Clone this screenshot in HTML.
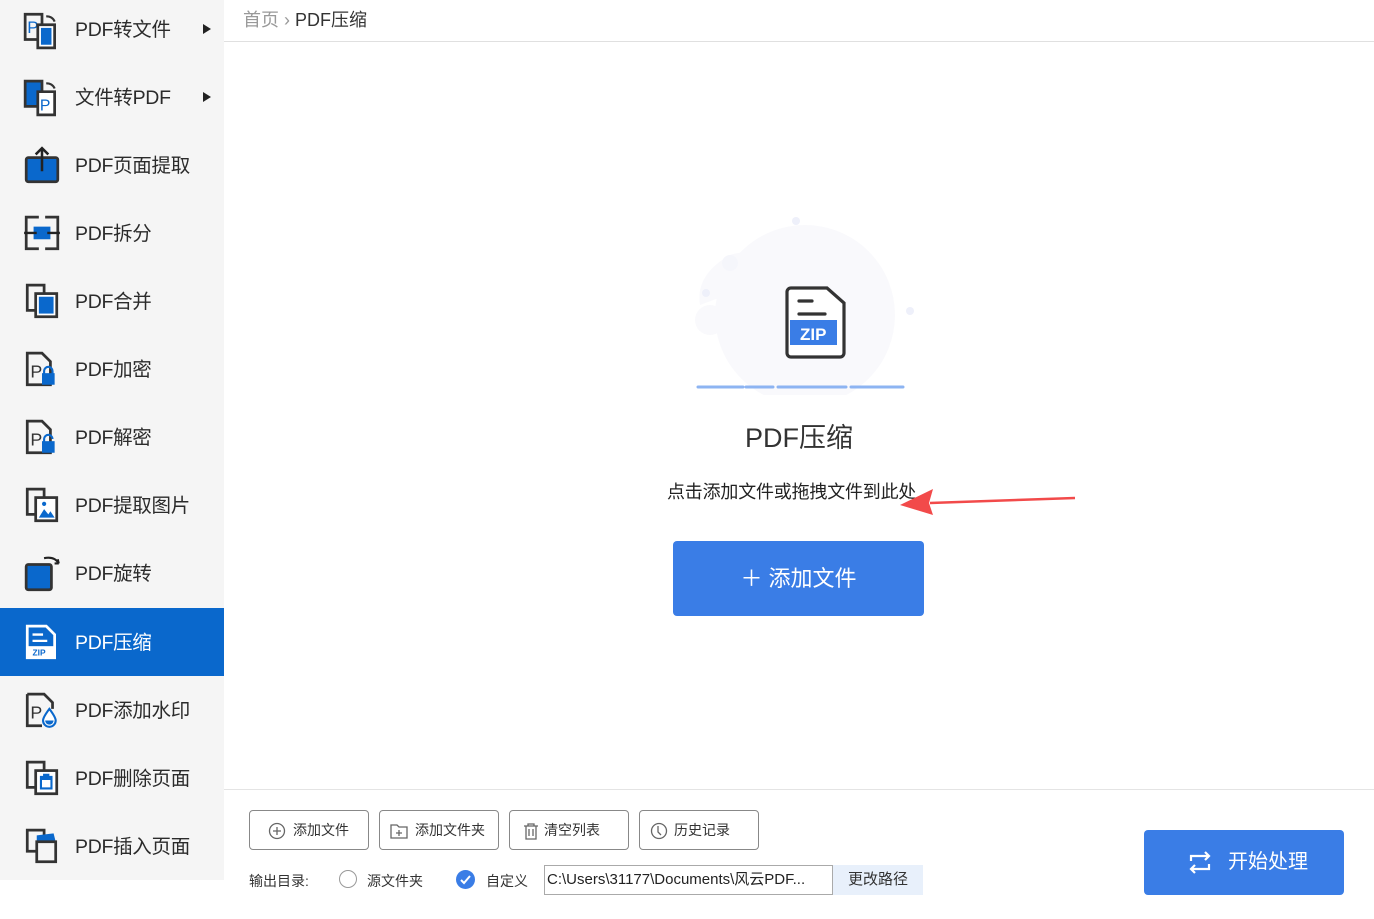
<!DOCTYPE html>
<html><head><meta charset="utf-8"><style>
*{margin:0;padding:0;box-sizing:border-box}
body{width:1374px;height:919px;position:relative;background:#fff;font-family:"Liberation Sans","Noto Sans CJK SC",sans-serif;color:#333;overflow:hidden}
.sb{position:absolute;left:0;top:0;width:224px;height:880px;background:#f5f5f5}
.it{position:absolute;left:0;width:224px;height:68px}
.it svg{position:absolute;left:23px;top:15px}
.it span{position:absolute;left:75px;top:22px;font-size:19.5px;line-height:26px;color:#2b2b2b;letter-spacing:-0.3px}
.it.act{background:#0a68cc}
.it.act span{color:#fff}
.tri{position:absolute;left:203px;top:29px;width:0;height:0;border-left:8px solid #222;border-top:5px solid transparent;border-bottom:5px solid transparent}
.bc{position:absolute;left:243px;top:6px;font-size:18px;color:#999}
.bc b{font-weight:normal;color:#333}
.hl{position:absolute;left:224px;top:41px;width:1150px;height:1px;background:#e0e0e0}
.fl{position:absolute;left:224px;top:789px;width:1150px;height:1px;background:#e4e4e4}
.btn{position:absolute;top:810px;width:120px;height:40px;border:1px solid #888;border-radius:4px;font-size:14px;color:#333;line-height:38px}
.btn svg{position:absolute;left:18px;top:11px}
.btn span{position:absolute;left:43px}
</style></head><body>
<div class="sb">
<div class="it" style="top:-5px"><svg width="38" height="40" viewBox="0 0 36 38"><path d="M2 4h16v24H2z" fill="none" stroke="#333" stroke-width="2.6"/><text x="4" y="22" font-size="16" fill="#0a68cc" font-family="Liberation Sans">P</text><path d="M14 14h16v22H14z" fill="#fff" stroke="#333" stroke-width="2.6"/><rect x="17" y="17" width="10" height="16" fill="#0a68cc"/><path d="M22 6q6 0 8 5" fill="none" stroke="#333" stroke-width="2"/></svg><span>PDF转文件</span><i class="tri"></i></div>
<div class="it" style="top:63px"><svg width="38" height="40" viewBox="0 0 36 38"><path d="M2 3h16v24H2z" fill="#0a68cc" stroke="#333" stroke-width="2.6"/><path d="M14 13h16v22H14z" fill="#fff" stroke="#333" stroke-width="2.6"/><text x="16" y="31" font-size="15" fill="#0a68cc" font-family="Liberation Sans">P</text><path d="M22 5q6 0 8 5" fill="none" stroke="#333" stroke-width="2"/></svg><span>文件转PDF</span><i class="tri"></i></div>
<div class="it" style="top:131px"><svg width="38" height="40" viewBox="0 0 36 38"><rect x="3" y="11" width="30" height="23" rx="2" fill="#0a68cc" stroke="#333" stroke-width="2.6"/><path d="M18 24V2M12 8l6-6 6 6" fill="none" stroke="#222" stroke-width="2.4"/></svg><span>PDF页面提取</span></div>
<div class="it" style="top:199px"><svg width="38" height="40" viewBox="0 0 36 38"><path d="M15 3H3v30h12M21 3h12v30H21" fill="none" stroke="#333" stroke-width="2.6"/><rect x="10" y="12" width="16" height="12" fill="#0a68cc"/><path d="M1 18h12M23 18H35" stroke="#222" stroke-width="2.2"/></svg><span>PDF拆分</span></div>
<div class="it" style="top:267px"><svg width="38" height="40" viewBox="0 0 36 38"><path d="M4 3h16v24H4z" fill="none" stroke="#333" stroke-width="2.6"/><rect x="12" y="11" width="20" height="22" fill="#fff" stroke="#333" stroke-width="2.6"/><rect x="15" y="14" width="14" height="16" fill="#0a68cc"/></svg><span>PDF合并</span></div>
<div class="it" style="top:335px"><svg width="38" height="40" viewBox="0 0 36 38"><path d="M4 3h14l8 8v22H4z" fill="none" stroke="#333" stroke-width="2.6"/><text x="7" y="26" font-size="17" fill="#333" font-family="Liberation Sans">P</text><rect x="18" y="22" width="12" height="11" fill="#0a68cc"/><path d="M20 23v-3a4 4 0 018 0v3" fill="none" stroke="#0a68cc" stroke-width="2"/></svg><span>PDF加密</span></div>
<div class="it" style="top:403px"><svg width="38" height="40" viewBox="0 0 36 38"><path d="M4 3h14l8 8v22H4z" fill="none" stroke="#333" stroke-width="2.6"/><text x="7" y="26" font-size="17" fill="#333" font-family="Liberation Sans">P</text><rect x="18" y="22" width="12" height="11" fill="#0a68cc"/><path d="M20 23v-3a4 4 0 018 0" fill="none" stroke="#0a68cc" stroke-width="2"/></svg><span>PDF解密</span></div>
<div class="it" style="top:471px"><svg width="38" height="40" viewBox="0 0 36 38"><path d="M4 3h16v24H4z" fill="none" stroke="#333" stroke-width="2.6"/><rect x="12" y="11" width="20" height="22" fill="#fff" stroke="#333" stroke-width="2.6"/><path d="M15 30l5-8 4 5 2-3 4 6z" fill="#0a68cc"/><circle cx="20" cy="17" r="2" fill="#0a68cc"/></svg><span>PDF提取图片</span></div>
<div class="it" style="top:539px"><svg width="40" height="40" viewBox="0 0 38 38"><rect x="3" y="10" width="24" height="24" rx="2" fill="#0a68cc" stroke="#333" stroke-width="2.6"/><path d="M20 4q10-2 14 5M34 9l-1-4M34 9l-4 0" fill="none" stroke="#222" stroke-width="2"/></svg><span>PDF旋转</span></div>
<div class="it act" style="top:608px"><svg width="38" height="40" viewBox="0 0 36 38"><path d="M4 3h18l8 8v22H4z" fill="none" stroke="#fff" stroke-width="2.6"/><path d="M9 11h10M9 17h14" stroke="#fff" stroke-width="2.2"/><rect x="5" y="22" width="25" height="10" fill="#fff"/><text x="9" y="31" font-size="8" font-weight="bold" fill="#0a68cc" font-family="Liberation Sans">ZIP</text></svg><span>PDF压缩</span></div>
<div class="it" style="top:676px"><svg width="38" height="40" viewBox="0 0 36 38"><path d="M4 3h16l8 8v6M18 33H4V3" fill="none" stroke="#333" stroke-width="2.6"/><text x="7" y="26" font-size="17" fill="#333" font-family="Liberation Sans">P</text><path d="M25 17q-6 8-6 11a6 6 0 0012 0q0-3-6-11z" fill="#fff" stroke="#0a68cc" stroke-width="2"/><path d="M21 28a4 4 0 008 0z" fill="#0a68cc"/></svg><span>PDF添加水印</span></div>
<div class="it" style="top:744px"><svg width="38" height="40" viewBox="0 0 36 38"><path d="M4 3h16v24H4z" fill="none" stroke="#333" stroke-width="2.6"/><rect x="12" y="11" width="20" height="22" fill="#fff" stroke="#333" stroke-width="2.6"/><path d="M16 17h12M19 15h6M17 19h10v9H17z" fill="none" stroke="#0a68cc" stroke-width="2"/></svg><span>PDF删除页面</span></div>
<div class="it" style="top:812px"><svg width="38" height="40" viewBox="0 0 36 38"><path d="M4 3h16v20H4z" fill="none" stroke="#333" stroke-width="2.6"/><path d="M13 8l16-2 2 8-18 2z" fill="#0a68cc"/><rect x="13" y="14" width="18" height="19" fill="#f5f5f5" stroke="#333" stroke-width="2.6"/></svg><span>PDF插入页面</span></div>
</div>

<div class="bc">首页 › <b>PDF压缩</b></div>
<div class="hl"></div>

<svg style="position:absolute;left:670px;top:205px" width="260" height="190">
<circle cx="135" cy="110" r="90" fill="#f9f9fc"/>
<path d="M30 100q-5-30 30-50q30-10 50 20z" fill="#f9f9fc"/>
<circle cx="40" cy="115" r="15" fill="#f9f9fc"/>
<circle cx="60" cy="58" r="8" fill="#f5f6fb"/><circle cx="126" cy="16" r="4" fill="#eef0fa"/><circle cx="36" cy="88" r="4" fill="#eef0fa"/><circle cx="240" cy="106" r="4" fill="#eef0fa"/>
<path d="M121 83h36l17 15v50a4 4 0 01-4 4h-49a4 4 0 01-4-4V87a4 4 0 014-4z" fill="#fff" stroke="#333" stroke-width="3.2"/>
<path d="M129 96h13M129 109h26" stroke="#333" stroke-width="3.2" stroke-linecap="round"/>
<rect x="120" y="115" width="47" height="25" fill="#3a7de6"/>
<text x="130" y="135" font-size="17" font-weight="bold" fill="#fff" font-family="Liberation Sans">ZIP</text>
<path d="M28 182h45M76 182h27M108 182h68M181 182h52" stroke="#8db4f2" stroke-width="3" stroke-linecap="round"/>
</svg>

<div style="position:absolute;left:0;width:1598px;top:416px;text-align:center;font-size:27px;color:#333">PDF压缩</div>
<div style="position:absolute;left:667px;top:478px;font-size:18px;color:#222;letter-spacing:-0.2px">点击添加文件或拖拽文件到此处</div>
<svg style="position:absolute;left:895px;top:485px" width="185" height="35"><path d="M180 13L35 18" stroke="#f24a4a" stroke-width="2.5"/><path d="M5 20L38 4L34 18L38 30z" fill="#f24a4a"/></svg>
<div style="position:absolute;left:673px;top:541px;width:251px;height:75px;background:#3a7de6;border-radius:4px;color:#fff;font-size:22px;line-height:75px;text-align:center">＋ 添加文件</div>

<div class="fl"></div>
<div class="btn" style="left:249px"><svg width="18" height="18"><circle cx="9" cy="9" r="7.5" fill="none" stroke="#666" stroke-width="1.3"/><path d="M9 5v8M5 9h8" stroke="#666" stroke-width="1.3"/></svg><span>添加文件</span></div>
<div class="btn" style="left:379px"><svg width="18" height="18" style="left:10px"><path d="M1 3h6l2 2h8v11H1z" fill="none" stroke="#666" stroke-width="1.3"/><path d="M9 8v6M6 11h6" stroke="#666" stroke-width="1.3"/></svg><span style="left:35px">添加文件夹</span></div>
<div class="btn" style="left:509px"><svg width="18" height="18" style="left:12px"><path d="M2 4h14M6 4V2h6v2M4 4v13h10V4M7 7v7M11 7v7" fill="none" stroke="#666" stroke-width="1.3"/></svg><span style="left:34px">清空列表</span></div>
<div class="btn" style="left:639px"><svg width="18" height="18" style="left:10px"><circle cx="9" cy="9" r="7.5" fill="none" stroke="#666" stroke-width="1.3"/><path d="M8 4v6l3 3" fill="none" stroke="#666" stroke-width="1.3"/></svg><span style="left:34px">历史记录</span></div>

<div style="position:absolute;left:249px;top:871px;font-size:14px;color:#333">输出目录:</div>
<div style="position:absolute;left:339px;top:870px;width:18px;height:18px;border:1px solid #999;border-radius:50%"></div>
<div style="position:absolute;left:367px;top:871px;font-size:14px">源文件夹</div>
<div style="position:absolute;left:456px;top:870px;width:19px;height:19px;background:#3a7de6;border-radius:50%"><svg width="19" height="19"><path d="M5 10l3 3 6-7" fill="none" stroke="#fff" stroke-width="2"/></svg></div>
<div style="position:absolute;left:486px;top:871px;font-size:14px">自定义</div>
<div style="position:absolute;left:544px;top:865px;width:289px;height:30px;border:1px solid #aaa;font-size:15px;line-height:28px;padding-left:2px;color:#222;white-space:nowrap;overflow:hidden">C:\Users\31177\Documents\风云PDF...</div>
<div style="position:absolute;left:833px;top:865px;width:90px;height:30px;background:#e8f0fb;font-size:15px;line-height:30px;text-align:center;color:#333">更改路径</div>

<div style="position:absolute;left:1144px;top:830px;width:200px;height:65px;background:#3a7de6;border-radius:4px;color:#fff;font-size:20px;line-height:65px">
<svg style="position:absolute;left:43px;top:21px" width="26" height="24"><path d="M4 10V5h18M18 1l4 4-4 4M22 13v5H4M8 22l-4-4 4-4" fill="none" stroke="#fff" stroke-width="2.2"/></svg>
<span style="position:absolute;left:84px">开始处理</span></div>
</body></html>
